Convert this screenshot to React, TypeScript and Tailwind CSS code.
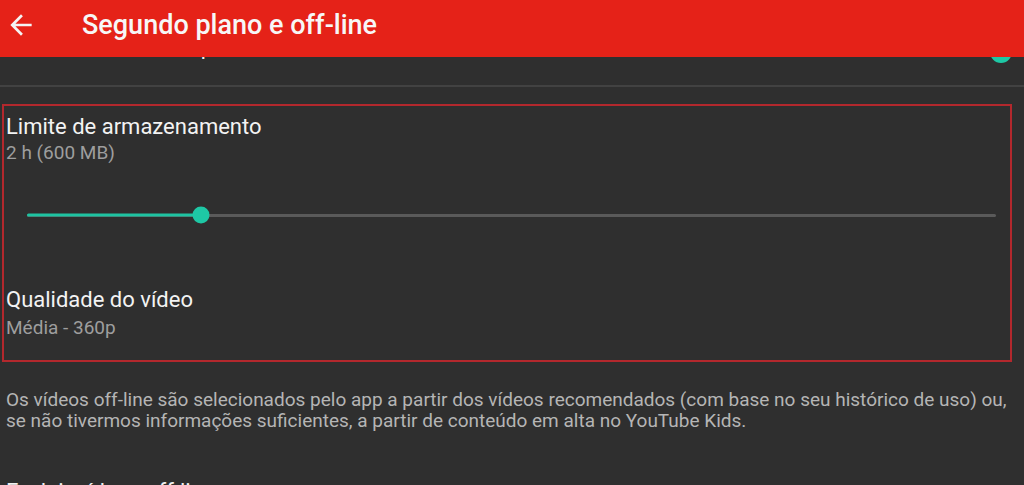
import React from "react";

const font = { fontFamily: "Roboto, 'Noto Sans', Arial, sans-serif" };

function Slider({ value }: { value: number }) {
  return (
    <div className="relative h-[32px] ml-[21px] mr-[14px] mt-[34px] flex items-center">
      <div className="h-[3px] w-full bg-[#5a5a5a] rounded-full" />
      <div
        className="absolute left-0 top-1/2 -translate-y-1/2 h-[3px] bg-[#1ec4a2] rounded-full"
        style={{ width: `${value * 100}%` }}
      />
      <div
        className="absolute top-1/2 -translate-y-1/2 -translate-x-1/2 w-[17px] h-[17px] rounded-full bg-[#1ec8a5]"
        style={{ left: `${value * 100}%` }}
      />
    </div>
  );
}

export default function App() {
  return (
    <div className="w-[1024px] h-[485px] overflow-hidden bg-[#2f2f2f] flex flex-col" style={font}>
      <header className="relative z-10 h-[57px] shrink-0 bg-[#e52218] flex items-start">
        <div className="w-[32px] h-[32px] ml-[5px] mt-[9px] shrink-0">
          <svg viewBox="0 0 24 24" width="32" height="32" fill="#f4f4f4">
            <path d="M20 11H7.83l5.59-5.59L12 4l-8 8 8 8 1.41-1.41L7.83 13H20v-2z" />
          </svg>
        </div>
        <h1 className="ml-[45px] mt-[9px] text-[27px] leading-[32px] font-medium text-[#f7f7f7]">
          Segundo plano e off-line
        </h1>
      </header>

      <div className="-mt-[40px] flex flex-col">
        <div className="h-[68px] flex items-start justify-between pl-[6px] pr-[14px]">
          <div className="mt-[16px] text-[22px] leading-[28px] text-[#f1f1f1]">
            Download somente por Wi-Fi
          </div>
          <div className="relative mt-[30px] w-[30px] h-[10px] rounded-full bg-[#1a7f6b] flex items-center justify-end">
            <div className="w-[22px] h-[22px] rounded-full bg-[#1ec8a5] -mr-[2px] shrink-0" />
          </div>
        </div>
        <div className="h-[2px] bg-[#424242]" />

        <div className="mt-[17px] mx-[2px] w-[1010px] border-2 border-[#b3282d] pl-[2px] pt-[7px] pb-[20px]">
          <div className="text-[22px] leading-[28px] text-[#f3f3f3]">Limite de armazenamento</div>
          <div className="text-[19px] leading-[24px] text-[#9e9e9e]">2 h (600 MB)</div>
          <Slider value={0.1796} />
          <div className="mt-[55px] text-[22px] leading-[28px] text-[#f3f3f3]">Qualidade do vídeo</div>
          <div className="mt-[2px] text-[19px] leading-[24px] text-[#9e9e9e]">Média - 360p</div>
        </div>

        <p className="mt-[27px] pl-[6px] pr-[4px] text-[19px] leading-[21px] text-[#b5b5b5]">
          Os vídeos off-line são selecionados pelo app a partir dos vídeos recomendados (com base no seu histórico de uso) ou,
          se não tivermos informações suficientes, a partir de conteúdo em alta no YouTube Kids.
        </p>

        <div className="mt-[47px] px-[6px] text-[22px] leading-[28px] text-[#f1f1f1]">
          Excluir vídeos off-line
        </div>
      </div>
    </div>
  );
}
